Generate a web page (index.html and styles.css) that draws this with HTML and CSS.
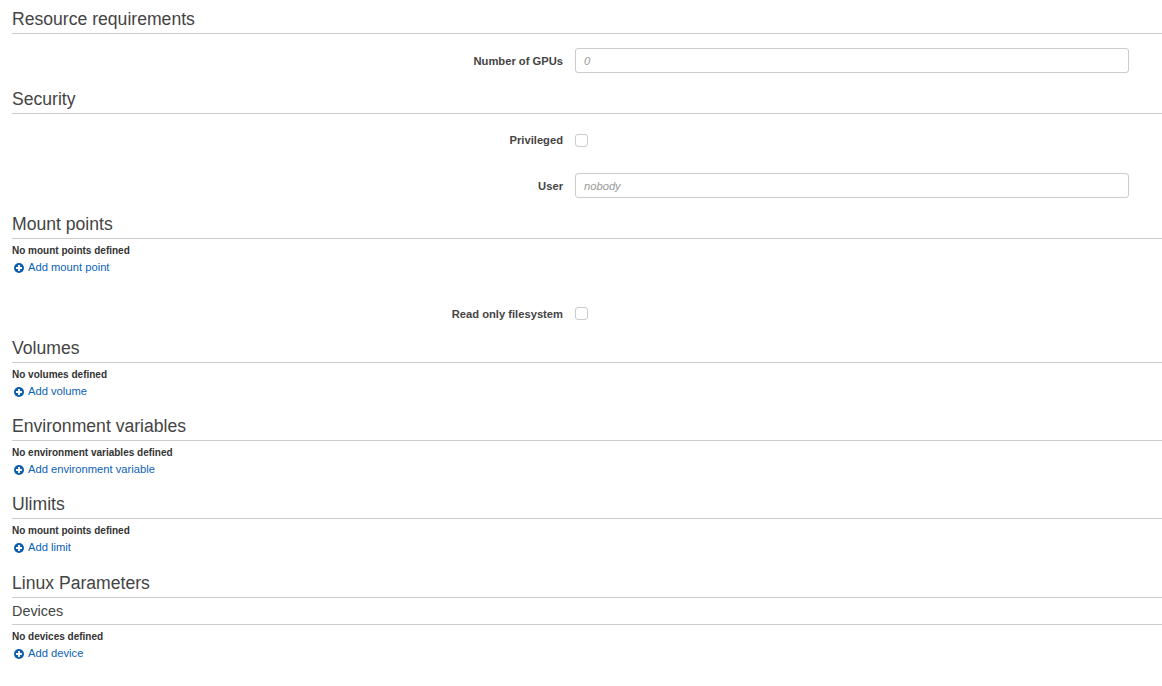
FILE: index.html
```html
<!DOCTYPE html>
<html lang="en">
<head>
<meta charset="utf-8">
<title>Container properties</title>
<link rel="stylesheet" href="styles.css">
</head>
<body>
<section class="section">
  <h2 class="heading">Resource requirements</h2>
  <div class="form">
    <div class="row"><label class="label" for="gpus">Number of GPUs</label><input class="input" id="gpus" placeholder="0"></div>
  </div>
</section>
<section class="section">
  <h2 class="heading">Security</h2>
  <div class="form">
    <div class="row"><label class="label label-raised" for="priv">Privileged</label><input class="check" id="priv" type="checkbox"></div>
    <div class="row"><label class="label" for="user">User</label><input class="input" id="user" placeholder="nobody"></div>
  </div>
</section>
<section class="section">
  <h2 class="heading">Mount points</h2>
  <div class="list list-tall">
    <p class="empty">No mount points defined</p>
    <a class="add" href="#"><svg class="plus" viewBox="0 0 12 12"><circle cx="6" cy="6" r="6" fill="#0f5fa8"/><path d="M6 2.5v7M2.5 6h7" stroke="#fff" stroke-width="2.2"/></svg>Add mount point</a>
  </div>
  <div class="form form-tight">
    <div class="row"><label class="label" for="ro">Read only filesystem</label><input class="check" id="ro" type="checkbox"></div>
  </div>
</section>
<section class="section">
  <h2 class="heading">Volumes</h2>
  <div class="list">
    <p class="empty">No volumes defined</p>
    <a class="add" href="#"><svg class="plus" viewBox="0 0 12 12"><circle cx="6" cy="6" r="6" fill="#0f5fa8"/><path d="M6 2.5v7M2.5 6h7" stroke="#fff" stroke-width="2.2"/></svg>Add volume</a>
  </div>
</section>
<section class="section">
  <h2 class="heading">Environment variables</h2>
  <div class="list">
    <p class="empty">No environment variables defined</p>
    <a class="add" href="#"><svg class="plus" viewBox="0 0 12 12"><circle cx="6" cy="6" r="6" fill="#0f5fa8"/><path d="M6 2.5v7M2.5 6h7" stroke="#fff" stroke-width="2.2"/></svg>Add environment variable</a>
  </div>
</section>
<section class="section">
  <h2 class="heading">Ulimits</h2>
  <div class="list list-wide">
    <p class="empty">No mount points defined</p>
    <a class="add" href="#"><svg class="plus" viewBox="0 0 12 12"><circle cx="6" cy="6" r="6" fill="#0f5fa8"/><path d="M6 2.5v7M2.5 6h7" stroke="#fff" stroke-width="2.2"/></svg>Add limit</a>
  </div>
</section>
<section class="section">
  <h2 class="heading">Linux Parameters</h2>
  <h3 class="subheading">Devices</h3>
  <div class="list">
    <p class="empty">No devices defined</p>
    <a class="add" href="#"><svg class="plus" viewBox="0 0 12 12"><circle cx="6" cy="6" r="6" fill="#0f5fa8"/><path d="M6 2.5v7M2.5 6h7" stroke="#fff" stroke-width="2.2"/></svg>Add device</a>
  </div>
</section>
</body>
</html>
```

FILE: styles.css
```css
* { box-sizing: border-box; }
html, body { margin: 0; padding: 0; }
body {
  padding: 8px 0 0 12px;
  background: #fff;
  color: #444;
  font-family: "Liberation Sans", Arial, sans-serif;
  font-size: 11px;
}
.heading {
  margin: 0;
  height: 26px;
  border-bottom: 1px solid #ccc;
  font-size: 17.6px;
  font-weight: 400;
  line-height: 22px;
  color: #444;
}
.subheading {
  margin: 0;
  height: 27px;
  border-bottom: 1px solid #ccc;
  font-size: 14.4px;
  font-weight: 400;
  line-height: 27px;
  color: #444;
}
.form {
  display: flex;
  flex-direction: column;
  gap: 20px;
  padding: 14px 0 15px;
}
.form-tight { padding: 0 0 11px; }
.row {
  display: flex;
  align-items: center;
  gap: 12px;
  height: 25px;
}
.label {
  width: 551px;
  text-align: right;
  font-size: 11.2px;
  line-height: 12px;
  font-weight: 700;
  color: #444;
}
.label-raised { margin-bottom: 2px; }
.input {
  width: 554px;
  height: 25px;
  padding: 0 8px;
  border: 1px solid #ccc;
  border-radius: 3px;
  background: #fff;
  font: 11.2px "Liberation Sans", Arial, sans-serif;
  color: #444;
}
.input::placeholder { color: #999; font-style: italic; opacity: 1; }
.check {
  appearance: none;
  width: 13px;
  height: 13px;
  margin: 0;
  border: 1px solid #ccc;
  border-radius: 3px;
  background: #fff;
}
.list {
  padding: 6px 0 0;
  height: 52px;
}
.list-tall { height: 62px; }
.list-wide { height: 53px; }
.empty {
  margin: 0;
  height: 12px;
  font-size: 10px;
  line-height: 12px;
  font-weight: 700;
  color: #333;
}
.add {
  display: flex;
  align-items: center;
  gap: 4px;
  margin-top: 4px;
  padding-left: 2px;
  height: 12px;
  font-size: 11.2px;
  line-height: 12px;
  color: #0b62b5;
  text-decoration: none;
}
.plus { width: 10px; height: 10px; flex: none; margin-top: 1px; }
```
